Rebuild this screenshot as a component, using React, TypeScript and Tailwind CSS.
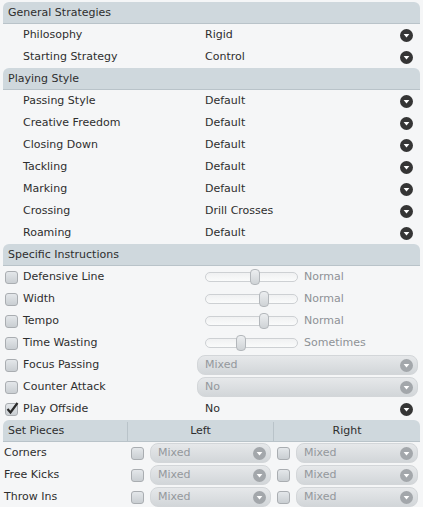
import React from 'react';

const font = { fontFamily: '"DejaVu Sans", "Liberation Sans", sans-serif' };

function Arrow({ disabled }: { disabled?: boolean }) {
    return (
        <svg width="13" height="13" viewBox="0 0 13 13" className="shrink-0">
            <circle cx="6.5" cy="6.5" r="6.5" fill={disabled ? '#a3a7ab' : '#353535'} />
            <path d="M3.6 4.9 H9.4 L6.5 8.6 Z" fill="#ffffff" />
        </svg>
    );
}

function Checkbox({ checked }: { checked?: boolean }) {
    return (
        <div className="relative h-[13px] w-[13px] shrink-0 rounded-[3px] border border-[#a9adb1] bg-gradient-to-b from-[#e4e7ea] to-[#c9ced2]">
            {checked && (
                <svg width="15" height="15" viewBox="0 0 15 15" className="absolute -left-[1px] -top-[3px]">
                    <path d="M2.5 8 L5.5 11.5 L12.5 2" fill="none" stroke="#2a2a2a" strokeWidth="2.2" />
                </svg>
            )}
        </div>
    );
}

function Header({ title }: { title: string }) {
    return (
        <div className="mx-[3px] flex h-[22px] items-center rounded-t-[6px] border-b border-[#b9c3c9] bg-[#cfd8dd] pl-[5px] pt-[2px] text-[11px] text-[#2e2e2e]">
            {title}
        </div>
    );
}

function ValueRow({ label, value }: { label: string; value: string }) {
    return (
        <div className="flex h-[22px] items-center text-[11px] text-[#2e2e2e]">
            <div className="w-[205px] pl-[23px]">{label}</div>
            <div className="flex-1">{value}</div>
            <div className="pr-[10px]">
                <Arrow />
            </div>
        </div>
    );
}

function Slider({ pos }: { pos: number }) {
    return (
        <div className="relative flex h-[16px] w-[93px] items-center">
            <div className="h-[10px] w-full rounded-full border border-[#cdd0d3] bg-gradient-to-b from-[#f0f1f2] to-[#fafbfb]" />
            <div
                className="absolute top-0 h-[16px] w-[10px] rounded-[4px] border border-[#b3b7bb] bg-gradient-to-b from-[#eceef0] to-[#cfd3d6]"
                style={{ left: pos - 5 }}
            />
        </div>
    );
}

function SliderRow({ label, pos, value }: { label: string; pos: number; value: string }) {
    return (
        <div className="flex h-[22px] items-center text-[11px] text-[#2e2e2e]">
            <div className="flex w-[205px] items-center gap-[5px] pl-[5px]">
                <Checkbox />
                {label}
            </div>
            <Slider pos={pos} />
            <div className="pl-[6px] text-[#8e9296]">{value}</div>
        </div>
    );
}

function Select({ value, className }: { value: string; className: string }) {
    return (
        <div
            className={`flex h-[20px] items-center justify-between rounded-[8px] border border-[#d3d6d9] bg-gradient-to-b from-[#e6e8ea] to-[#d2d6d9] pl-[7px] pr-[4px] text-[11px] text-[#94989c] ${className}`}
        >
            <span>{value}</span>
            <Arrow disabled />
        </div>
    );
}

function SelectRow({ label, value }: { label: string; value: string }) {
    return (
        <div className="flex h-[22px] items-center text-[11px] text-[#2e2e2e]">
            <div className="flex w-[197px] items-center gap-[5px] pl-[5px]">
                <Checkbox />
                {label}
            </div>
            <Select value={value} className="w-[221px]" />
        </div>
    );
}

function SetPieceRow({ label }: { label: string }) {
    return (
        <div className="flex h-[22px] items-center text-[11px] text-[#2e2e2e]">
            <div className="w-[131px] pl-[4px]">{label}</div>
            <Checkbox />
            <Select value="Mixed" className="ml-[6px] w-[121px]" />
            <div className="ml-[6px]">
                <Checkbox />
            </div>
            <Select value="Mixed" className="ml-[6px] w-[122px]" />
        </div>
    );
}

export default function App() {
    return (
        <div className="h-[507px] w-[423px] overflow-hidden bg-[#f5f6f7] pt-[2px]" style={font}>
            <Header title="General Strategies" />
            <ValueRow label="Philosophy" value="Rigid" />
            <ValueRow label="Starting Strategy" value="Control" />

            <Header title="Playing Style" />
            <ValueRow label="Passing Style" value="Default" />
            <ValueRow label="Creative Freedom" value="Default" />
            <ValueRow label="Closing Down" value="Default" />
            <ValueRow label="Tackling" value="Default" />
            <ValueRow label="Marking" value="Default" />
            <ValueRow label="Crossing" value="Drill Crosses" />
            <ValueRow label="Roaming" value="Default" />

            <Header title="Specific Instructions" />
            <SliderRow label="Defensive Line" pos={50} value="Normal" />
            <SliderRow label="Width" pos={59} value="Normal" />
            <SliderRow label="Tempo" pos={59} value="Normal" />
            <SliderRow label="Time Wasting" pos={36} value="Sometimes" />
            <SelectRow label="Focus Passing" value="Mixed" />
            <SelectRow label="Counter Attack" value="No" />
            <div className="flex h-[22px] items-center text-[11px] text-[#2e2e2e]">
                <div className="flex w-[205px] items-center gap-[5px] pl-[5px]">
                    <Checkbox checked />
                    Play Offside
                </div>
                <div className="flex-1">No</div>
                <div className="pr-[10px]">
                    <Arrow />
                </div>
            </div>

            {/* Set pieces */}
            <div className="mx-[3px] flex h-[22px] rounded-t-[6px] border-b border-[#b9c3c9] bg-[#cfd8dd] pt-[2px] text-[11px] text-[#2e2e2e]">
                <div className="flex w-[125px] items-center border-r border-[#b9c3c9] pl-[5px]">Set Pieces</div>
                <div className="flex w-[146px] items-center justify-center border-r border-[#b9c3c9]">Left</div>
                <div className="flex flex-1 items-center justify-center">Right</div>
            </div>
            <SetPieceRow label="Corners" />
            <SetPieceRow label="Free Kicks" />
            <SetPieceRow label="Throw Ins" />
        </div>
    );
}
